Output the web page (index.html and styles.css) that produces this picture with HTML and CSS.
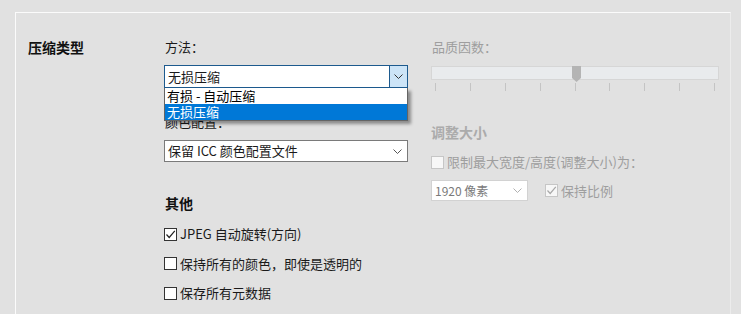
FILE: index.html
```html
<!DOCTYPE html>
<html lang="zh-CN">
<head>
<meta charset="utf-8">
<link rel="stylesheet" href="styles.css">
</head>
<body>
<div class="frame">
  <div class="panel">
    <div class="col-title">
      <div class="section-title">压缩类型</div>
    </div>
    <div class="col-mid">
      <div class="label">方法：</div>
      <div class="select-wrap">
        <div class="select focused">
          <span class="select-text">无损压缩</span>
          <span class="select-btn">
            <svg width="9" height="5" viewBox="0 0 9 5"><path d="M0.5 0.5 L4.5 4.5 L8.5 0.5" fill="none" stroke="#333" stroke-width="1"/></svg>
          </span>
        </div>
        <div class="dropdown">
          <div class="option">有损 - 自动压缩</div>
          <div class="option selected">无损压缩</div>
        </div>
      </div>
      <div class="label label-color">颜色配置：</div>
      <div class="select plain">
        <span class="select-text">保留 ICC 颜色配置文件</span>
        <span class="chev">
          <svg width="9" height="5" viewBox="0 0 9 5"><path d="M0.5 0.5 L4.5 4.5 L8.5 0.5" fill="none" stroke="#555" stroke-width="1"/></svg>
        </span>
      </div>
      <div class="section-title other">其他</div>
      <div class="checks">
        <label class="check"><span class="box"><svg width="11" height="11" viewBox="0 0 11 11"><path d="M1.5 5.5 L4.2 8.5 L9.8 1.8" fill="none" stroke="#222" stroke-width="1.2"/></svg></span>JPEG 自动旋转(方向)</label>
        <label class="check"><span class="box"></span>保持所有的颜色，即使是透明的</label>
        <label class="check"><span class="box"></span>保存所有元数据</label>
      </div>
    </div>
    <div class="col-right">
      <div class="label dis">品质因数：</div>
      <div class="slider">
        <div class="track"></div>
        <div class="thumb">
          <svg width="9" height="16" viewBox="0 0 9 16"><path d="M0 0 H9 V12 L4.5 16 L0 12 Z" fill="#b4b4b4"/></svg>
        </div>
        <div class="ticks">
          <span></span><span></span><span></span><span></span><span></span><span></span><span></span><span></span><span></span>
        </div>
      </div>
      <div class="section-title dis resize">调整大小</div>
      <label class="check dis limit"><span class="box dis-box"></span>限制最大宽度/高度(调整大小)为：</label>
      <div class="size-row">
        <div class="select small">
          <span class="select-text">1920 像素</span>
          <span class="chev">
            <svg width="9" height="5" viewBox="0 0 9 5"><path d="M0.5 0.5 L4.5 4.5 L8.5 0.5" fill="none" stroke="#b0b0b0" stroke-width="1"/></svg>
          </span>
        </div>
        <label class="check dis"><span class="box dis-box"><svg width="11" height="11" viewBox="0 0 11 11"><path d="M1.5 5.5 L4.2 8.5 L9.8 1.8" fill="none" stroke="#a8a8a8" stroke-width="1.2"/></svg></span>保持比例</label>
      </div>
    </div>
  </div>
</div>
</body>
</html>
```

FILE: styles.css
```css
* { box-sizing: border-box; }
html, body {
  margin: 0;
  padding: 0;
  background: #e1e1e1;
  width: 741px;
  height: 314px;
  overflow: hidden;
  font-family: "Noto Sans CJK SC", "Noto Sans", sans-serif;
  font-size: 13px;
  color: #1a1a1a;
}
.frame {
  padding: 12px 0 0 15px;
}
.panel {
  width: 716px;
  height: 302px;
  border-top: 1px solid #fbfbfb;
  border-left: 1px solid #fbfbfb;
  border-right: 1px solid #ececec;
  display: flex;
  padding-top: 25px;
}
.col-title {
  width: 148px;
  padding-left: 12px;
}
.section-title {
  font-weight: 700;
  font-size: 14px;
  line-height: 18px;
  color: #111;
}
.col-mid {
  width: 244px;
  display: flex;
  flex-direction: column;
}
.label {
  line-height: 18px;
  height: 18px;
  padding-left: 1px;
}
.select-wrap {
  position: relative;
  margin-top: 9px;
}
.select {
  display: flex;
  align-items: center;
  background: #fff;
  border: 1px solid #7a7a7a;
  height: 23px;
  padding-left: 3px;
}
.select.focused {
  border-color: #1d5a8e;
}
.select-text {
  flex: 1;
  line-height: 20px;
  white-space: nowrap;
}
.select-btn {
  width: 18px;
  height: 21px;
  background: #cce4f7;
  border-left: 1px solid #1d5a8e;
  display: flex;
  align-items: center;
  justify-content: center;
}
.chev {
  width: 18px;
  display: flex;
  align-items: center;
  justify-content: center;
  margin-right: 1px;
}
.dropdown {
  position: absolute;
  left: 0;
  top: 23px;
  width: 244px;
  background: #fff;
  border: 1px solid #646464;
  border-top: none;
  box-shadow: 3px 3px 3px rgba(0, 0, 0, 0.38);
  z-index: 2;
}
.option {
  height: 16px;
  line-height: 16px;
  padding-left: 2px;
  white-space: nowrap;
  color: #000;
}
.option.selected {
  background: #0078d7;
  color: #fff;
}
.label-color {
  margin-top: 25px;
}
.select.plain {
  margin-top: 9px;
  height: 22px;
  border-color: #7a7a7a;
}
.other {
  margin-top: 32px;
  padding-left: 1px;
}
.checks {
  margin-top: 13px;
  display: flex;
  flex-direction: column;
  gap: 11.5px;
}
.check {
  display: flex;
  align-items: center;
  height: 18px;
  line-height: 18px;
  white-space: nowrap;
}
.box {
  width: 13px;
  height: 13px;
  border: 1px solid #333;
  background: #fff;
  margin-right: 3px;
  display: flex;
  align-items: center;
  justify-content: center;
  flex: none;
}
.col-right {
  margin-left: 23px;
  width: 288px;
  display: flex;
  flex-direction: column;
}
.dis {
  color: #9e9e9e;
}
.slider {
  position: relative;
  margin-top: 10px;
  height: 28px;
}
.track {
  height: 14px;
  background: #e9ebed;
  border: 1px solid #d6d6d6;
}
.thumb {
  position: absolute;
  left: 141px;
  top: 0;
  line-height: 0;
}
.ticks {
  display: flex;
  justify-content: space-between;
  padding: 0 4px;
  margin-top: 3px;
}
.ticks span {
  width: 1px;
  height: 8px;
  background: #c4c4c4;
}
.resize {
  margin-top: 29px;
  font-weight: 700;
  color: #ababab;
}
.limit {
  margin-top: 12px;
}
.dis-box {
  border-color: #c6c6c6;
  background: #f7f7f7;
}
.size-row {
  display: flex;
  align-items: center;
  margin-top: 9px;
  gap: 17px;
}
.select.small {
  width: 97px;
  height: 21px;
  border-color: #d2d2d2;
  color: #7a7a7a;
  font-size: 12px;
}
```
